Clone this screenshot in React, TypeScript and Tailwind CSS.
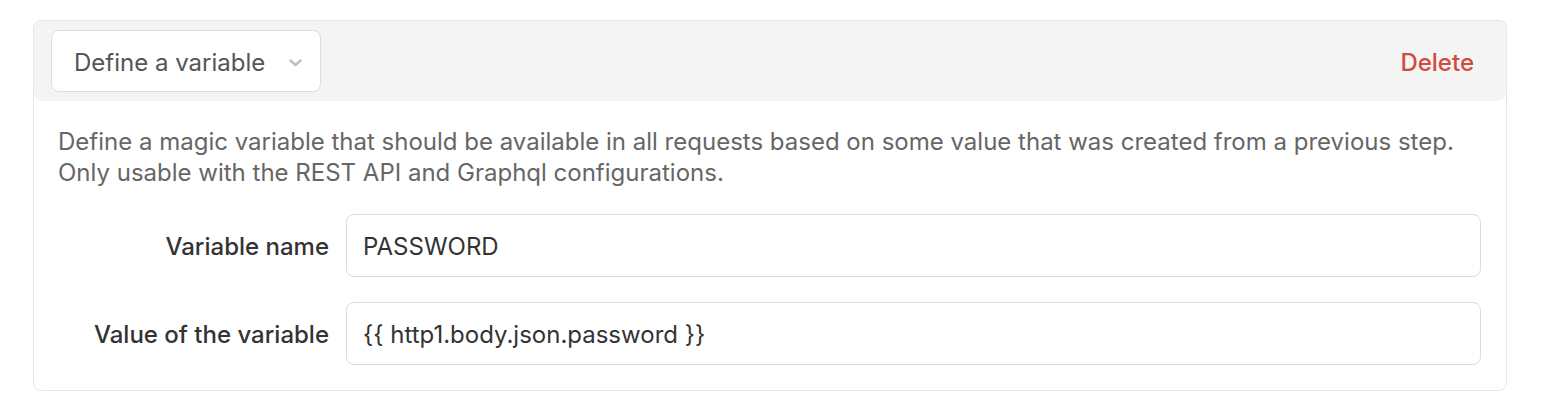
import React from 'react';

const rows = [
  { label: 'Variable name', value: 'PASSWORD' },
  { label: 'Value of the variable', value: '{{ http1.body.json.password }}' },
];

export default function App() {
  return (
    <div className="min-h-[410px] bg-white pt-[20px] pl-[33px]" style={{ fontFamily: 'Inter, "Noto Sans", sans-serif' }}>
      <div className="w-[1474px] h-[371px] rounded-[8px] border border-[#e6e6e6] bg-white">
        {/* header */}
        <div className="h-[80px] flex items-center justify-between rounded-[8px] bg-[#f4f4f4] pl-[17px] pr-[32px] pt-[3px]">
          <div className="h-[62px] w-[270px] flex items-center justify-between rounded-[8px] border border-[#dcdcdc] bg-white pl-[22px] pr-[18px] pt-[3px] -mt-[3px]">
            <span className="text-[24px] text-[#555555]">Define a variable</span>
            <svg width="13" height="8" viewBox="0 0 13 8" className="mt-[1px]">
              <path d="M1.5 1.5 L6.5 6 L11.5 1.5" fill="none" stroke="#bdbdbd" strokeWidth="2.4" strokeLinecap="round" strokeLinejoin="round" />
            </svg>
          </div>
          <button className="text-[24px] font-medium text-[#d14b40]">Delete</button>
        </div>

        {/* body */}
        <div className="px-[24px] pt-[25px]">
          <p className="text-[24px] leading-[31px] text-[#666666]">
            Define a magic variable that should be available in all requests based on some value that was created from a previous step.
            <br />
            Only usable with the REST API and Graphql configurations.
          </p>
          <div className="mt-[26px] flex flex-col gap-[25px]">
            {rows.map((row) => (
              <div key={row.label} className="flex items-center gap-[17px]">
                <label className="w-[271px] text-right text-[24px] font-medium text-[#333333] pt-[2px]">{row.label}</label>
                <div className="h-[63px] w-[1135px] flex items-center rounded-[8px] border border-[#dcdcdc] bg-white pl-[16px] pt-[3px] text-[24px] text-[#333333]">
                  {row.value}
                </div>
              </div>
            ))}
          </div>
        </div>
      </div>
    </div>
  );
}
